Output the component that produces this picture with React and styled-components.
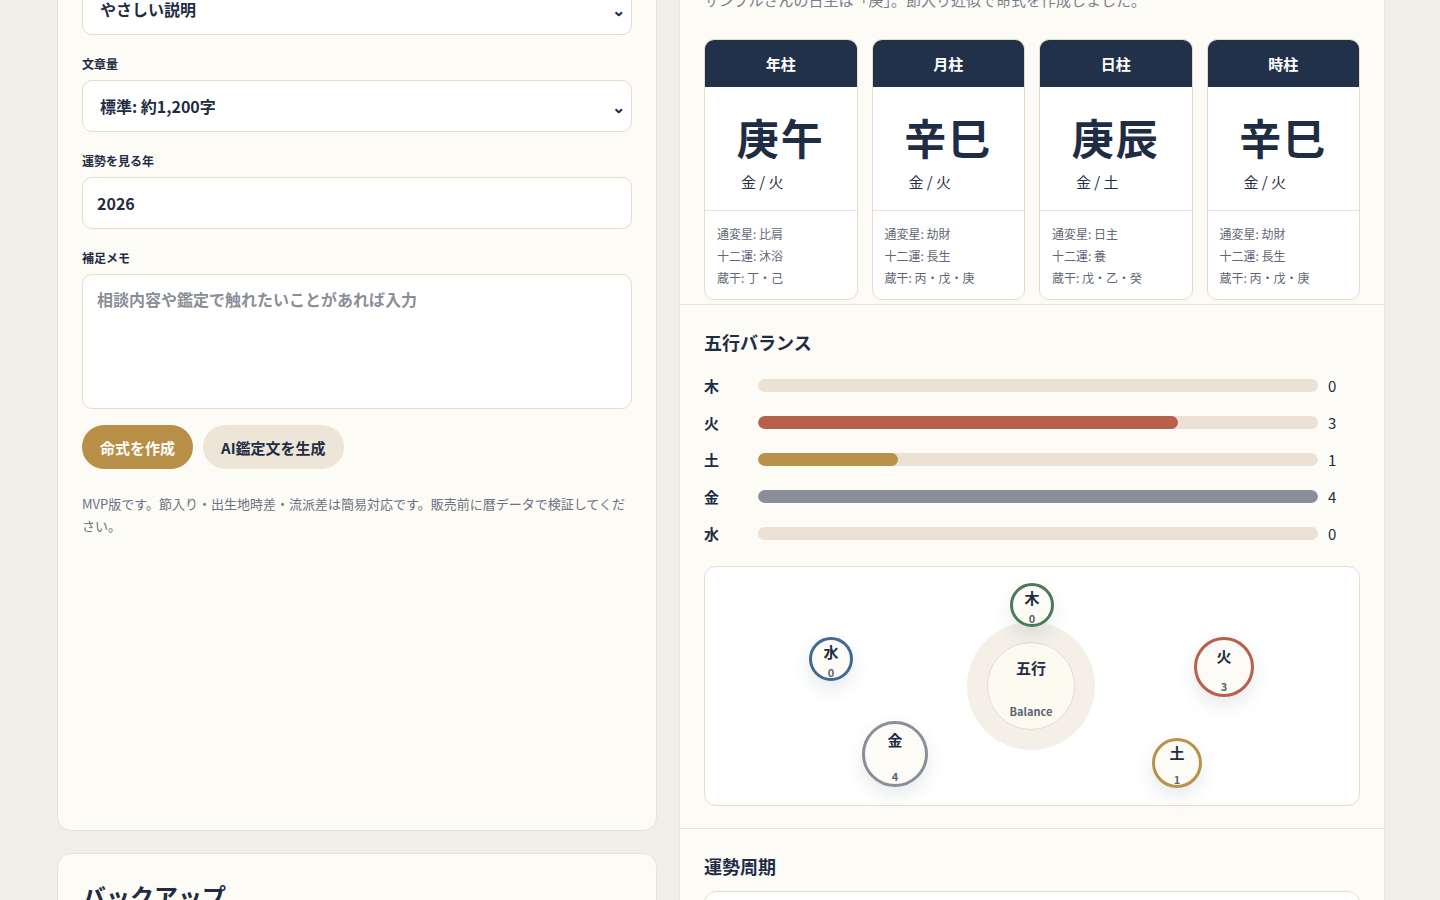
import React from 'react';
import styled, { createGlobalStyle } from 'styled-components';

const Global = createGlobalStyle`
  html, body { margin: 0; background: #f1eee8; height: 900px; overflow: hidden; }
  body { font-family: "Noto Sans CJK JP", "Noto Sans", sans-serif; color: #1f2d44; }
`;

const Page = styled.div`
  display: flex;
  gap: 22px;
  padding-left: 57px;
  margin-top: -48px;
  align-items: flex-start;
`;

const LeftCol = styled.div`
  width: 600px;
  margin-top: 6px;
  display: flex;
  flex-direction: column;
  gap: 22px;
`;

const Card = styled.div`
  background: #fcfbf6;
  border: 1px solid #e9e3d6;
  border-radius: 14px;
  padding: 24px 24px 0;
  box-sizing: border-box;
  height: ${p => p.h}px;
`;

const Label = styled.div`
  font-size: 12px;
  font-weight: 700;
  margin: 20px 0 8px;
`;

const Field = styled.div`
  height: ${p => p.h || 52}px;
  box-sizing: border-box;
  background: #fff;
  border: 1px solid #e6dcc8;
  border-radius: 10px;
  display: flex;
  align-items: ${p => (p.area ? 'flex-start' : 'center')};
  justify-content: space-between;
  padding: ${p => (p.area ? '12px 14px' : '0 6px 0 ' + (p.sel ? 17 : 14) + 'px')};
  font-size: 16px;
  font-weight: 700;
  color: ${p => (p.ph ? '#8a8e97' : '#1f2d44')};
`;

const Buttons = styled.div`
  display: flex;
  gap: 10px;
  margin-top: 16px;
`;

const Btn = styled.button`
  height: 44px;
  padding: 0 18px;
  border: none;
  border-radius: 22px;
  font: 700 15px "Noto Sans CJK JP", sans-serif;
  background: ${p => (p.primary ? '#b88f46' : '#ede6d8')};
  color: ${p => (p.primary ? '#fff' : '#1f2d44')};
`;

const Note = styled.p`
  font-size: 13px;
  line-height: 22px;
  color: #6b7180;
  margin: 24px 0 0;
`;

const BackupTitle = styled.h2`
  font-size: 24px;
  font-weight: 700;
  margin: 0;
`;

const Right = styled.div`
  width: 704px;
  background: #fcfbf6;
  border-left: 1px solid #ebe5d9;
  border-right: 1px solid #ebe5d9;
  min-height: 1000px;
`;

const Section = styled.div`
  padding: ${p => p.pad || '24px'};
  border-bottom: 1px solid #ebe4d5;
`;

const Intro = styled.p`
  margin: 0 0 24px;
  color: #7a7f88;
  font-size: 15px;
  line-height: 30px;
`;

const Pillars = styled.div`
  display: grid;
  grid-template-columns: repeat(4, 1fr);
  gap: 14px;
`;

const Pillar = styled.div`
  background: #fff;
  border: 1px solid #e6dcc8;
  border-radius: 10px;
  overflow: hidden;
`;

const PHead = styled.div`
  height: 47px;
  background: #22314a;
  color: #fff;
  font-size: 15px;
  font-weight: 700;
  display: flex;
  align-items: center;
  justify-content: center;
`;

const PMain = styled.div`
  height: 123px;
  border-bottom: 1px solid #ece3d2;
  display: flex;
  flex-direction: column;
  align-items: center;
`;

const Stem = styled.div`
  font-size: 42px;
  font-weight: 700;
  margin-top: 24px;
  line-height: 52px;
  letter-spacing: 2px;
`;

const Elem = styled.div`
  font-size: 15px;
  margin-top: 8px;
  align-self: flex-start;
  padding-left: 36px;
`;

const PInfo = styled.div`
  padding: 12px 12px 10px;
  font-size: 12px;
  line-height: 22px;
  color: #626876;
`;

const STitle = styled.h3`
  font-size: 18px;
  font-weight: 700;
  margin: 0 0 12px;
`;

const BarRow = styled.div`
  display: grid;
  grid-template-columns: 44px 560px 1fr;
  align-items: center;
  column-gap: 10px;
  height: 37px;
  font-size: 15px;
  font-weight: 700;
`;

const Track = styled.div`
  height: 13px;
  border-radius: 7px;
  background: #ebe2d5;
  overflow: hidden;
`;

const Fill = styled.div`
  height: 100%;
  border-radius: 7px;
  background: ${p => p.c};
`;

const Val = styled.span`
  font-weight: 400;
`;

const Diagram = styled.div`
  position: relative;
  height: 238px;
  margin-top: 14px;
  background: #fff;
  border: 1px solid #e6dcc8;
  border-radius: 12px;
`;

const Node = styled.div`
  position: absolute;
  box-sizing: border-box;
  border-radius: 50%;
  background: #fcfbf6;
  border: 3px solid ${p => p.c};
  box-shadow: 0 8px 18px rgba(60, 70, 90, 0.12);
  display: flex;
  flex-direction: column;
  align-items: center;
  justify-content: space-between;
  padding: ${p => p.size > 50 ? '6px 0 2px' : '2px 0 0'};
  font-size: 15px;
  font-weight: 700;
  line-height: 20px;
`;

const NodeNum = styled.span`
  font-size: 11px;
  line-height: 12px;
  color: #5e6575;
`;

const Hub = styled.div`
  position: absolute;
  left: 262px;
  top: 55px;
  width: 128px;
  height: 128px;
  border-radius: 50%;
  background: #f4f0e8;
  display: flex;
  align-items: center;
  justify-content: center;
`;

const HubInner = styled.div`
  width: 88px;
  height: 88px;
  box-sizing: border-box;
  border-radius: 50%;
  background: #fdfaf0;
  border: 1px solid #e6dcc8;
  display: flex;
  flex-direction: column;
  align-items: center;
  justify-content: space-between;
  padding: 14px 0 10px;
  font-size: 15px;
  font-weight: 700;
  small { font-size: 11px; color: #5e6575; }
`;

const CycleBox = styled.div`
  height: 60px;
  background: #fff;
  border: 1px solid #e6dcc8;
  border-radius: 12px;
`;

const pillars = [
  ['年柱', '庚午', '金 / 火', '比肩', '沐浴', '丁・己'],
  ['月柱', '辛巳', '金 / 火', '劫財', '長生', '丙・戊・庚'],
  ['日柱', '庚辰', '金 / 土', '日主', '養', '戊・乙・癸'],
  ['時柱', '辛巳', '金 / 火', '劫財', '長生', '丙・戊・庚'],
];

const bars = [
  ['木', 0, '#4a7a5a'],
  ['火', 3, '#b9604a'],
  ['土', 1, '#b8914a'],
  ['金', 4, '#8a8e99'],
  ['水', 0, '#3f6a96'],
];

// centres measured relative to diagram box
const nodes = [
  ['木', 0, '#4a7a5a', 327, 38, 44],
  ['水', 0, '#3f6a96', 126, 92, 44],
  ['火', 3, '#b9604a', 519, 100, 60],
  ['金', 4, '#8a8e99', 190, 187, 66],
  ['土', 1, '#b8914a', 472, 196, 50],
];

export default function App() {
  return (
    <>
      <Global />
      <Page>
        <LeftCol>
          <Card h={873}>
            <Field sel>やさしい説明<span>⌄</span></Field>
            <Label>文章量</Label>
            <Field sel>標準: 約1,200字<span>⌄</span></Field>
            <Label>運勢を見る年</Label>
            <Field>2026</Field>
            <Label>補足メモ</Label>
            <Field h={135} area ph>相談内容や鑑定で触れたいことがあれば入力</Field>
            <Buttons>
              <Btn primary>命式を作成</Btn>
              <Btn>AI鑑定文を生成</Btn>
            </Buttons>
            <Note>MVP版です。節入り・出生地時差・流派差は簡易対応です。販売前に暦データで検証してください。</Note>
          </Card>
          <Card h={200}>
            <BackupTitle>バックアップ</BackupTitle>
          </Card>
        </LeftCol>
        <Right>
          <Section pad="33px 24px 4px">
            <Intro>サンプルさんの日主は「庚」。節入り近似で命式を作成しました。</Intro>
            <Pillars>
              {pillars.map(p => (
                <Pillar key={p[0]}>
                  <PHead>{p[0]}</PHead>
                  <PMain>
                    <Stem>{p[1]}</Stem>
                    <Elem>{p[2]}</Elem>
                  </PMain>
                  <PInfo>
                    <div>通変星: {p[3]}</div>
                    <div>十二運: {p[4]}</div>
                    <div>蔵干: {p[5]}</div>
                  </PInfo>
                </Pillar>
              ))}
            </Pillars>
          </Section>
          <Section pad="24px 24px 22px">
            <STitle>五行バランス</STitle>
            {bars.map(([k, v, c]) => (
              <BarRow key={k}>
                <span>{k}</span>
                <Track><Fill c={c} style={{ width: `${(v / 4) * 100}%` }} /></Track>
                <Val>{v}</Val>
              </BarRow>
            ))}
            <Diagram>
              <Hub>
                <HubInner>五行<small>Balance</small></HubInner>
              </Hub>
              {nodes.map(([k, v, c, x, y, s]) => (
                <Node key={k} c={c} size={s}
                  style={{ left: x - s / 2, top: y - s / 2, width: s, height: s }}>
                  <span>{k}</span>
                  <NodeNum>{v}</NodeNum>
                </Node>
              ))}
            </Diagram>
          </Section>
          <Section>
            <STitle>運勢周期</STitle>
            <CycleBox />
          </Section>
        </Right>
      </Page>
    </>
  );
}
